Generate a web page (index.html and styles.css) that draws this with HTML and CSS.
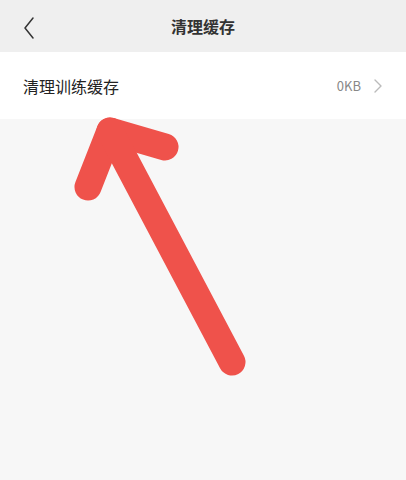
FILE: index.html
```html
<!DOCTYPE html>
<html lang="zh-CN">
<head>
    <meta charset="UTF-8">
    <meta name="viewport" content="width=device-width, initial-scale=1.0">
    <title>清理缓存</title>
    <link rel="stylesheet" href="styles.css">
</head>
<body>
    <header class="nav-bar">
        <span class="nav-back">
            <svg width="12" height="22" viewBox="0 0 12 22">
                <polyline points="10,1 2,11 10,21" fill="none" stroke="#333" stroke-width="1.5" stroke-linecap="round" stroke-linejoin="round"/>
            </svg>
        </span>
        <h1 class="nav-title">清理缓存</h1>
    </header>

    <div class="cell">
        <span class="cell-label">清理训练缓存</span>
        <span class="cell-value">0KB</span>
        <svg class="cell-arrow" width="8" height="14" viewBox="0 0 8 14">
            <polyline points="1,1 7,7 1,13" fill="none" stroke="#bbb" stroke-width="1.4" stroke-linecap="round" stroke-linejoin="round"/>
        </svg>
    </div>

    <!-- hint arrow pointing at the cache row -->
    <svg class="hint-arrow" width="406" height="480" viewBox="0 0 406 480">
        <g fill="none" stroke="#ef524b" stroke-width="27" stroke-linecap="round" stroke-linejoin="round">
            <polyline points="88,187 110,131 165,147"/>
            <line x1="110" y1="131" x2="232" y2="362"/>
        </g>
    </svg>
</body>
</html>
```

FILE: styles.css
```css
body {
    margin: 0;
    min-height: 480px;
    background: #f7f7f7;
    font-family: "Noto Sans CJK SC", "Noto Sans", sans-serif;
    color: #222;
}

.nav-bar {
    height: 52px;
    background: #efefef;
    display: flex;
    align-items: center;
    justify-content: center;
    position: relative;
}

.nav-back {
    position: absolute;
    left: 23px;
    top: 17px;
    display: flex;
}

.nav-title {
    margin: 0;
    font-size: 16px;
    font-weight: bold;
    color: #333;
}

.cell {
    height: 67px;
    background: #fff;
    display: flex;
    align-items: center;
    padding: 0 24px 0 23px;
}

.cell-label {
    flex: 1;
    font-size: 16px;
    color: #222;
}

.cell-value {
    font-size: 13px;
    color: #888;
    margin-right: 13px;
}

.cell-arrow {
    display: block;
}

.hint-arrow {
    position: absolute;
    left: 0;
    top: 0;
    pointer-events: none;
}
```
